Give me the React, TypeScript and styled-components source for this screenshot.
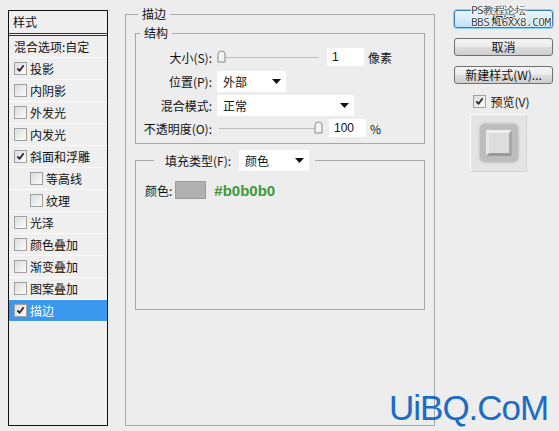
import React from "react";
import styled, { createGlobalStyle } from "styled-components";

const GlobalStyle = createGlobalStyle`
  html, body {
    margin: 0;
    padding: 0;
    background: #ededed;
  }
  body {
    font-family: "Noto Sans CJK SC", "DejaVu Sans", sans-serif;
    font-size: 12px;
    color: #111;
  }
`;

interface IStyleItem {
    label: string;
    checked?: boolean;
    indent?: boolean;
    selected?: boolean;
}

const styleItems: IStyleItem[] = [
    {label: "投影", checked: true},
    {label: "内阴影"},
    {label: "外发光"},
    {label: "内发光"},
    {label: "斜面和浮雕", checked: true},
    {label: "等高线", indent: true},
    {label: "纹理", indent: true},
    {label: "光泽"},
    {label: "颜色叠加"},
    {label: "渐变叠加"},
    {label: "图案叠加"},
    {label: "描边", checked: true, selected: true},
];

function Check({checked}: { checked?: boolean }) {
    return <CheckBox>
        {checked && <svg width="9" height="9" viewBox="0 0 10 10">
            <path d="M1.5 5 L4 7.5 L8.5 1.5" fill="none" stroke="#2a2a2a" strokeWidth="2"/>
        </svg>}
    </CheckBox>
}

function Thumb() {
    return <svg width="9" height="13" viewBox="0 0 9 13">
        <path d="M1 4 Q1 1 4.5 1 Q8 1 8 4 L8 12 L1 12 Z" fill="#f4f4f4" stroke="#8a8a8a"/>
    </svg>
}

function Arrow() {
    return <svg width="9" height="5" viewBox="0 0 9 5">
        <path d="M0 0 L9 0 L4.5 5 Z" fill="#111"/>
    </svg>
}

export default function App() {
    return <Dialog>
        <GlobalStyle/>
        <StylesPanel>
            <PanelHeader>样式</PanelHeader>
            <StyleRow>混合选项:自定</StyleRow>
            {styleItems.map(item =>
                <StyleRow key={item.label} $selected={item.selected} $indent={item.indent}>
                    <Check checked={item.checked}/>
                    {item.label}
                </StyleRow>
            )}
        </StylesPanel>

        <Main>
            <OuterGroup>
                <Legend $left={12}>描边</Legend>
                <InnerGroup>
                    <Legend $left={13}>结构</Legend>
                    <FormGrid>
                        <Label>大小(S):</Label>
                        <Controls>
                            <Slider $thumb={0}><Thumb/></Slider>
                            <NumberBox>1</NumberBox>
                            <Unit>像素</Unit>
                        </Controls>

                        <Label>位置(P):</Label>
                        <Controls>
                            <Select $width={69}>外部<Arrow/></Select>
                        </Controls>

                        <Label>混合模式:</Label>
                        <Controls>
                            <Select $width={137}>正常<Arrow/></Select>
                        </Controls>

                        <Label>不透明度(O):</Label>
                        <Controls>
                            <Slider $thumb={95} $inset><Thumb/></Slider>
                            <NumberBox>100</NumberBox>
                            <Unit>%</Unit>
                        </Controls>
                    </FormGrid>
                </InnerGroup>

                <FillGroup>
                    <FillLegend>
                        填充类型(F):
                        <Select $width={70}>颜色<Arrow/></Select>
                    </FillLegend>
                    <ColorRow>
                        颜色:
                        <Swatch/>
                        <ColorHex>#b0b0b0</ColorHex>
                    </ColorRow>
                </FillGroup>
            </OuterGroup>
        </Main>

        <Side>
            <Button $primary>
                确定
                <ForumMark>PS教程论坛<br/>BBS.16XX8.COM</ForumMark>
            </Button>
            <Button>取消</Button>
            <Button>新建样式(W)...</Button>
            <PreviewToggle><Check checked/>预览(V)</PreviewToggle>
            <PreviewBox>
                <Bevel><BevelFace/></Bevel>
            </PreviewBox>
        </Side>

        <SiteMark>UiBQ.CoM</SiteMark>
    </Dialog>
}

const Dialog = styled.div`
  position: relative;
  display: flex;
  align-items: flex-start;
  width: 559px;
  height: 431px;
  box-sizing: border-box;
  padding: 6px 0 0 8px;
  overflow: hidden;
`

const StylesPanel = styled.div`
  width: 100px;
  height: 416px;
  margin-top: 4px;
  box-sizing: border-box;
  border: 1px solid #111;
  background: #efefef;
`

const PanelHeader = styled.div`
  height: 22px;
  line-height: 22px;
  padding-left: 4px;
  border-bottom: 3px double #333;
`

const StyleRow = styled.div<{ $selected?: boolean; $indent?: boolean }>`
  display: flex;
  align-items: center;
  gap: 2px;
  height: 21px;
  padding-left: ${({$indent}) => $indent ? "21px" : "5px"};
  border-bottom: 1px solid #fbfbfb;
  background: ${({$selected}) => $selected ? "#3a98ee" : "transparent"};
  color: ${({$selected}) => $selected ? "#fff" : "#111"};
  white-space: nowrap;
`

const CheckBox = styled.span`
  display: inline-flex;
  align-items: center;
  justify-content: center;
  width: 11px;
  height: 11px;
  margin-right: 1px;
  border: 1px solid #a0a0a0;
  background: linear-gradient(135deg, #dcdcdc, #fdfdfd);
  flex-shrink: 0;
`

const Main = styled.div`
  margin-left: 17px;
`

const OuterGroup = styled.fieldset`
  width: 310px;
  height: 420px;
  box-sizing: border-box;
  margin: 0;
  padding: 3px 9px 0 9px;
  border: 1px solid #a8a8a8;
  min-width: 0;
`

const Legend = styled.legend<{ $left: number }>`
  margin-left: ${({$left}) => $left - 9}px;
  padding: 0 4px;
  line-height: 16px;
`

const InnerGroup = styled.fieldset`
  width: 290px;
  height: 119px;
  box-sizing: border-box;
  margin: 0;
  padding: 6px 0 0 0;
  border: 1px solid #a8a8a8;
  min-width: 0;
`

const FormGrid = styled.div`
  display: grid;
  grid-template-columns: 76px 1fr;
  grid-template-rows: 20px 22px 20px 20px;
  column-gap: 5px;
  row-gap: 3px;
  align-items: center;
`

const Label = styled.div`
  text-align: right;
  white-space: nowrap;
`

const Controls = styled.div`
  display: flex;
  align-items: center;
  height: 100%;
`

const Slider = styled.div<{ $thumb: number; $inset?: boolean }>`
  position: relative;
  width: 102px;
  margin-left: ${({$inset}) => $inset ? "2px" : "0"};
  height: 14px;
  margin-right: 8px;
  background: linear-gradient(#bdbdbd, #bdbdbd) no-repeat 0 7px / 100% 1px;

  svg {
    position: absolute;
    top: 0;
    left: ${({$thumb}) => $thumb}px;
  }
`

const NumberBox = styled.div`
  width: 37px;
  height: 18px;
  box-sizing: border-box;
  padding-left: 5px;
  line-height: 18px;
  background: #fff;
  font-family: "Liberation Sans", Arial, sans-serif;
  font-size: 12px;
`

const Unit = styled.span`
  margin-left: 4px;
`

const Select = styled.div<{ $width: number }>`
  display: flex;
  align-items: center;
  justify-content: space-between;
  width: ${({$width}) => $width}px;
  height: 21px;
  box-sizing: border-box;
  padding: 0 5px 0 6px;
  background: #fff;
  color: #111;
`

const FillGroup = styled.fieldset`
  width: 290px;
  height: 160px;
  box-sizing: border-box;
  margin: 6px 0 0 0;
  padding: 10px 9px 0 9px;
  border: 1px solid #a8a8a8;
  min-width: 0;
`

const FillLegend = styled.legend`
  display: flex;
  align-items: center;
  gap: 8px;
  margin-left: 9px;
  padding: 0 6px 0 11px;
`

const ColorRow = styled.div`
  display: flex;
  align-items: center;
  height: 18px;
`

const Swatch = styled.div`
  width: 31px;
  height: 18px;
  margin-left: 3px;
  box-sizing: border-box;
  border: 1px solid #9c9c9c;
  background: #b0b0b0;
`

const ColorHex = styled.span`
  margin-left: 8px;
  color: #3a9a3a;
  font-family: "Liberation Sans", Arial, sans-serif;
  font-weight: bold;
  font-size: 15px;
`

const Side = styled.div`
  display: flex;
  flex-direction: column;
  align-items: center;
  width: 99px;
  margin: 4px 0 0 19px;
`

const Button = styled.div<{ $primary?: boolean }>`
  position: relative;
  width: 99px;
  height: 18px;
  box-sizing: border-box;
  margin-bottom: 10px;
  border: 1px solid ${({$primary}) => $primary ? "#3a7cae" : "#707070"};
  border-radius: 3px;
  background: ${({$primary}) => $primary
          ? "linear-gradient(#eaf6fd, #bfe2f5)"
          : "linear-gradient(#f4f4f4 0%, #ebebeb 50%, #dcdcdc 51%, #cfcfcf 100%)"};
  box-shadow: ${({$primary}) => $primary ? "0 0 0 1px #8fd0f0" : "none"};
  text-align: center;
  line-height: 16px;
  white-space: nowrap;
`

const ForumMark = styled.div`
  position: absolute;
  top: -6px;
  left: 16px;
  font-family: "DejaVu Sans Mono", monospace;
  font-size: 11px;
  line-height: 12px;
  text-align: left;
  color: #444;
  letter-spacing: -0.5px;
  text-shadow: 1px 0 #fff, -1px 0 #fff, 0 1px #fff, 0 -1px #fff;
`

const PreviewToggle = styled.div`
  display: flex;
  align-items: center;
  gap: 3px;
  height: 16px;
  margin-top: -1px;
  margin-right: 4px;
`

const PreviewBox = styled.div`
  display: flex;
  align-items: center;
  justify-content: center;
  width: 57px;
  height: 58px;
  margin: 5px 10px 0 0;
  box-sizing: border-box;
  border-top: 1px solid #fff;
  border-left: 1px solid #fff;
  border-right: 1px solid #d2d2d2;
  border-bottom: 1px solid #d2d2d2;
  background: #e4e4e4;
`

const Bevel = styled.div`
  display: flex;
  align-items: center;
  justify-content: center;
  width: 38px;
  height: 38px;
  box-sizing: border-box;
  border-radius: 5px;
  background: #bdbdbd;
  box-shadow: 0 0 3px #a8a8a8;
`

const BevelFace = styled.div`
  width: 26px;
  height: 26px;
  box-sizing: border-box;
  border-top: 3px solid #f0f0f0;
  border-left: 3px solid #e6e6e6;
  border-right: 3px solid #a8a8a8;
  border-bottom: 3px solid #9a9a9a;
  background: #dddddd;
`

const SiteMark = styled.div`
  position: absolute;
  left: 389px;
  top: 388px;
  font-family: "Liberation Sans", Arial, sans-serif;
  font-size: 35px;
  letter-spacing: -1px;
  color: #1a6cc6;
`
